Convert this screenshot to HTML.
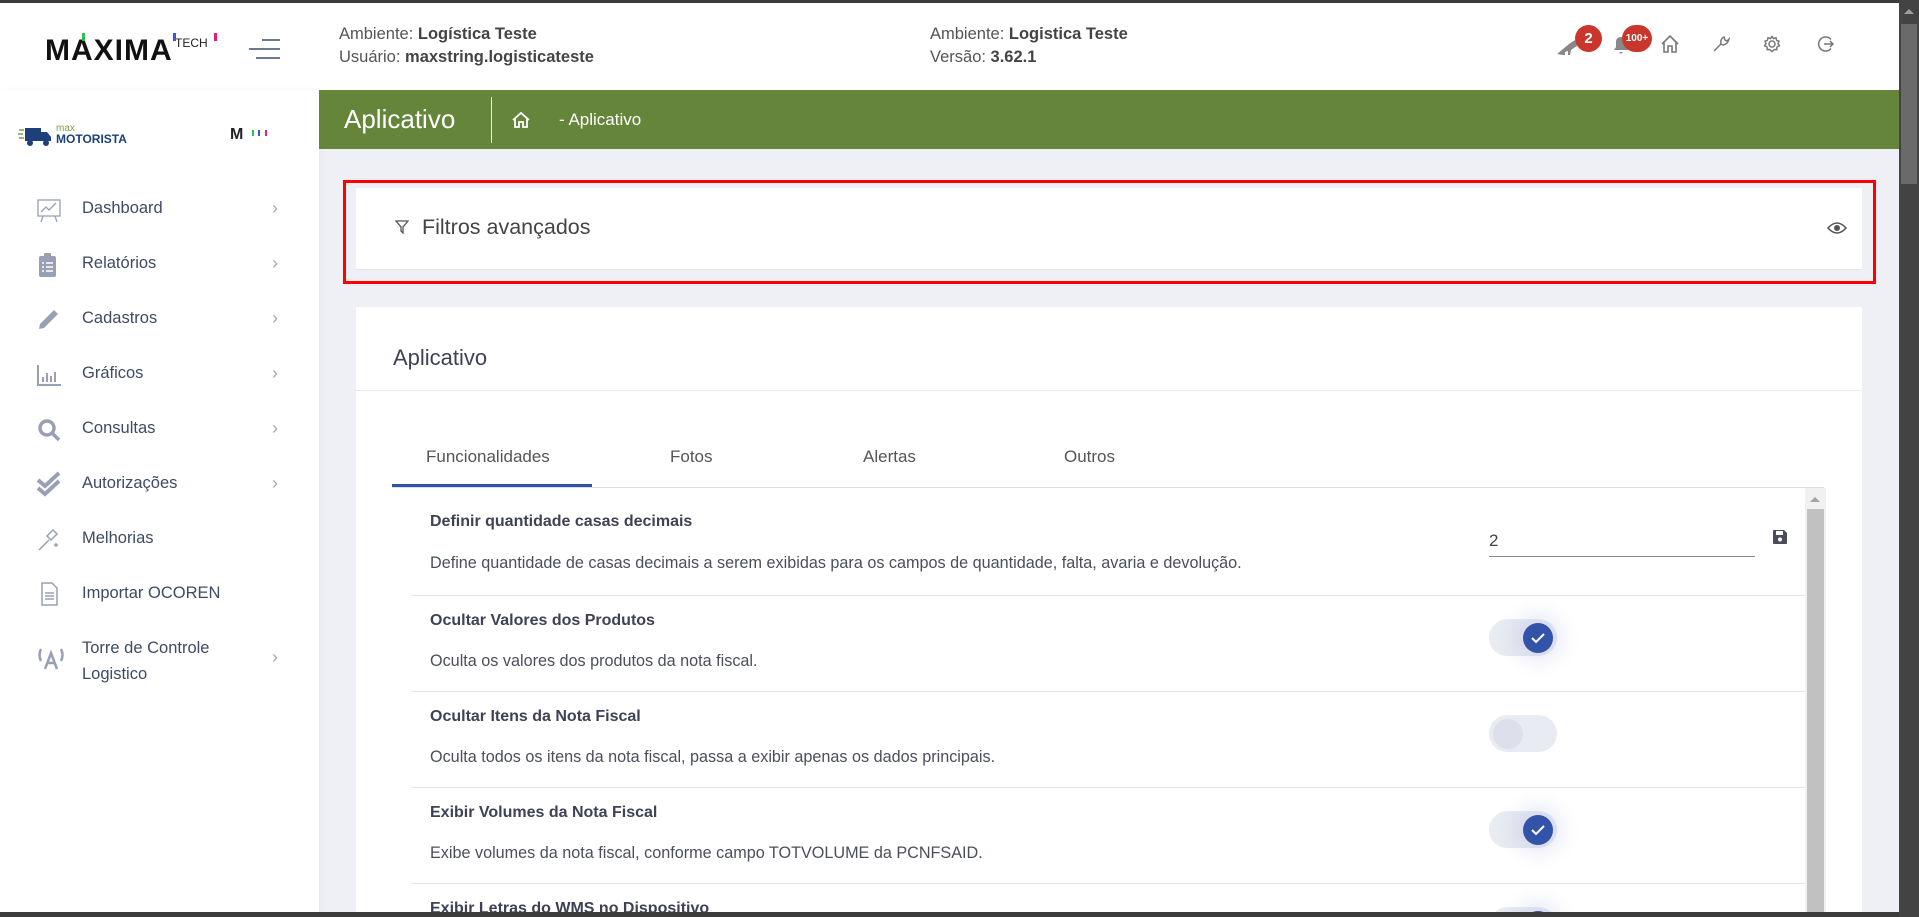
<!DOCTYPE html>
<html style="overflow:hidden;width:1919px;height:917px"><head><meta charset="utf-8"><style>
*{box-sizing:border-box;margin:0;padding:0}
body{width:1919px;height:917px;overflow:hidden;background:#eef0f6;font-family:"Liberation Sans",sans-serif;color:#3f4254;position:relative}
.abs{position:absolute}
#topb{left:0;top:0;width:1919px;height:3px;background:#3c3c3c}
#hdr{left:0;top:3px;width:1900px;height:87px;background:#fff}
#side{left:0;top:90px;width:319px;height:827px;background:#fff;box-shadow:0 2px 8px rgba(0,0,0,.06)}
#green{left:319px;top:90px;width:1581px;height:59px;background:#65853a}
#vs{left:1899px;top:0;width:20px;height:917px;background:#434343}
#vs .th{position:absolute;left:2px;top:24px;width:16px;height:160px;background:#6a6a6a}
#botb{left:0;top:912px;width:1900px;height:5px;background:#3c3c3c}
.ht{font-size:16.5px;color:#555}
.ht b{color:#444}
.nav{position:absolute;left:82px;font-size:16.5px;color:#3f4a64}
.chev{position:absolute;left:272px;font-size:18px;color:#aaa}
.ic{position:absolute;left:36px;width:26px;height:26px}
.badge{position:absolute;background:#c9372c;color:#fff;border-radius:50%;font-weight:bold;text-align:center}
.card{background:#fff}
.rt{position:absolute;left:430px;font-size:16px;font-weight:bold;color:#3f4254}
.rd{position:absolute;left:430px;font-size:16.2px;color:#4b4f5c}
.div{position:absolute;left:411px;width:1394px;height:1px;background:#e4e6ec}
.tog{position:absolute;left:1489px;width:68px;height:37px;border-radius:19px;background:#e9ebf2;overflow:visible}
.tog .k{position:absolute;top:4px;width:30px;height:30px;border-radius:50%}
.on .k{left:34px;background:#3353a8;box-shadow:0 0 18px 10px rgba(80,100,200,.12)}
.off .k{left:4px;background:#dde0ea}
.tab{position:absolute;top:447px;font-size:17px;color:#555}
#clip{position:absolute;left:0;top:0;width:1919px;height:917px;overflow:hidden}
</style></head><body><div id="clip">
<div id="topb" class="abs"></div>
<div id="hdr" class="abs"></div>
<div class="abs" style="left:45px;top:36px;font-size:30px;font-weight:bold;color:#111;letter-spacing:1px;line-height:30px">MAXIMA</div>
<div class="abs" style="left:175px;top:36px;font-size:12px;color:#222">TECH</div>
<div class="abs" style="left:82px;top:33px;width:3px;height:8px;background:#2fbf4f"></div>
<div class="abs" style="left:173px;top:33px;width:3px;height:8px;background:#4050e0"></div>
<div class="abs" style="left:214px;top:33px;width:3px;height:8px;background:#e0207a"></div>
<div class="abs" style="left:262px;top:39px;width:18px;height:2px;background:#6b7a90"></div>
<div class="abs" style="left:249px;top:48px;width:31px;height:2px;background:#6b7a90"></div>
<div class="abs" style="left:256px;top:57px;width:24px;height:2px;background:#6b7a90"></div>
<div class="abs ht" style="left:339px;top:25px">Ambiente: <b>Logística Teste</b></div>
<div class="abs ht" style="left:339px;top:48px">Usuário: <b>maxstring.logisticateste</b></div>
<div class="abs ht" style="left:930px;top:25px">Ambiente: <b>Logistica Teste</b></div>
<div class="abs ht" style="left:930px;top:48px">Versão: <b>3.62.1</b></div>
<svg class="abs" style="left:1555px;top:36px" width="24" height="20" viewBox="0 0 24 20"><path d="M2 18 L14 8 L20 4 L22 10 L16 14 L15 19 L13 19 L13 15 L10 16 L10 19 L8 19 Z" fill="#888"/></svg>
<div class="badge" style="left:1575px;top:25px;width:27px;height:27px;line-height:27px;font-size:15px">2</div>
<svg class="abs" style="left:1610px;top:34px" width="22" height="22" viewBox="0 0 22 22"><path d="M4 16 L6 13 L6 8 Q6 3 11 3 Q16 3 16 8 L16 13 L18 16 Z M9 18 L13 18 L11 20Z" fill="#888"/></svg>
<div class="badge" style="left:1622px;top:25px;width:30px;height:27px;line-height:27px;font-size:10px;border-radius:14px">100+</div>
<svg class="abs" style="left:1660px;top:34px" width="20" height="20" viewBox="0 0 20 20" fill="none" stroke="#777" stroke-width="1.6"><path d="M2 10 L10 2 L18 10 M4 8 L4 18 L8 18 L8 12 L12 12 L12 18 L16 18 L16 8"/></svg>
<svg class="abs" style="left:1712px;top:35px" width="18" height="18" viewBox="0 0 18 18" fill="none" stroke="#777" stroke-width="1.5"><path d="M2 16 L9 9 M9 9 Q8 4 12 2 L13 5 L15 6 L17 4 Q16 9 11 10 Z"/></svg>
<svg class="abs" style="left:1763px;top:35px" width="18" height="18" viewBox="0 0 18 18" fill="none" stroke="#777" stroke-width="1.5"><circle cx="9" cy="9" r="3"/><path d="M9 1.5 L10.5 3.5 L13 2.8 L13.6 5.3 L16 6.2 L15 8.5 L16.4 10.7 L14 12 L13.8 14.6 L11.2 14.5 L9 16.5 L6.8 14.5 L4.2 14.6 L4 12 L1.6 10.7 L3 8.5 L2 6.2 L4.4 5.3 L5 2.8 L7.5 3.5 Z"/></svg>
<svg class="abs" style="left:1817px;top:35px" width="18" height="18" viewBox="0 0 18 18" fill="none" stroke="#777" stroke-width="1.5"><path d="M14 4.5 A7 7 0 1 0 14 13.5 M7 9 L16 9 M13 6 L16 9 L13 12"/></svg>
<div id="side" class="abs"></div>
<svg class="abs" style="left:18px;top:127px" width="38" height="20" viewBox="0 0 38 20"><path d="M1 3h5M0 7h5M1 11h5" stroke="#7aa04a" stroke-width="1.5"/><rect x="7" y="1" width="16" height="13" fill="#1d3f7a"/><path d="M23 5h6l4 5v4H23z" fill="#1d3f7a"/><circle cx="12" cy="16" r="3" fill="#1d3f7a"/><circle cx="28" cy="16" r="3" fill="#1d3f7a"/></svg>
<div class="abs" style="left:56px;top:124px;font-size:10px;color:#7aa04a;line-height:10px">max</div>
<div class="abs" style="left:56px;top:133px;font-size:12px;font-weight:bold;color:#1d3f7a;line-height:12px">MOTORISTA</div>
<div class="abs" style="left:230px;top:126px;font-size:16px;font-weight:bold;color:#222">M</div>
<div class="abs" style="left:252px;top:130px;width:2px;height:6px;background:#2fbf4f"></div>
<div class="abs" style="left:258px;top:130px;width:2px;height:6px;background:#4050e0"></div>
<div class="abs" style="left:265px;top:130px;width:2px;height:6px;background:#e0207a"></div>

<svg class="ic" style="top:198px" viewBox="0 0 26 26" fill="none" stroke="#9aa0b4" stroke-width="1.3"><rect x="2" y="2" width="22" height="16"/><path d="M5 14 L10 9 L13 12 L20 5 M7 18 L5 24 M19 18 L21 24"/></svg>
<div class="nav" style="top:199px">Dashboard</div><div class="chev" style="top:198px">›</div>
<svg class="ic" style="top:252px" viewBox="0 0 26 26"><rect x="3" y="4" width="17" height="21" rx="2" fill="#9aa0b4"/><rect x="8" y="1" width="7" height="5" rx="1" fill="#9aa0b4"/><path d="M6 11h2M10 11h7M6 15h2M10 15h7M6 19h2M10 19h7" stroke="#fff" stroke-width="1.5"/></svg>
<div class="nav" style="top:254px">Relatórios</div><div class="chev" style="top:253px">›</div>
<svg class="ic" style="top:306px" viewBox="0 0 26 26"><path d="M3 23 L4 18 L18 4 L22 8 L8 22 Z" fill="#9aa0b4"/></svg>
<div class="nav" style="top:309px">Cadastros</div><div class="chev" style="top:308px">›</div>
<svg class="ic" style="top:362px" viewBox="0 0 26 26" fill="none" stroke="#9aa0b4" stroke-width="2"><path d="M2 3v20h23M7 20v-5M11 20v-9M15 20v-6M19 20v-10"/></svg>
<div class="nav" style="top:364px">Gráficos</div><div class="chev" style="top:363px">›</div>
<svg class="ic" style="top:417px" viewBox="0 0 26 26" fill="none" stroke="#9aa0b4" stroke-width="3.5"><circle cx="11" cy="11" r="7"/><path d="M16 16 L23 23"/></svg>
<div class="nav" style="top:419px">Consultas</div><div class="chev" style="top:418px">›</div>
<svg class="ic" style="top:471px" viewBox="0 0 26 26" fill="none" stroke="#9aa0b4" stroke-width="4"><path d="M2 9 L9 15 L23 2 M2 17 L9 23 L23 10"/></svg>
<div class="nav" style="top:474px">Autorizações</div><div class="chev" style="top:473px">›</div>
<svg class="ic" style="top:527px" viewBox="0 0 26 26" fill="none" stroke="#9aa0b4" stroke-width="1.5"><path d="M3 23 L13 13 M11 9 L17 3 L21 7 L15 13 Z M18 18h4M20 16v4"/></svg>
<div class="nav" style="top:529px">Melhorias</div>
<svg class="ic" style="top:581px" viewBox="0 0 26 26" fill="none" stroke="#9aa0b4" stroke-width="1.5"><path d="M6 2h10l5 5v17H6z M9 12h9M9 15h9M9 18h9"/></svg>
<div class="nav" style="top:584px">Importar OCOREN</div>
<svg class="ic" style="top:645px;width:30px" viewBox="0 0 30 26" fill="none" stroke="#9aa0b4" stroke-width="2.5"><path d="M5 4 Q2 10 5 16 M25 4 Q28 10 25 16 M9 24 L15 8 L21 24 M11 18h8"/></svg>
<div class="nav" style="top:635px;line-height:26px">Torre de Controle<br>Logistico</div><div class="chev" style="top:647px">›</div>

<div id="green" class="abs"></div>
<div class="abs" style="left:344px;top:104px;font-size:26px;color:#fff">Aplicativo</div>
<div class="abs" style="left:491px;top:97px;width:1px;height:46px;background:#e8eee0"></div>
<svg class="abs" style="left:512px;top:111px" width="18" height="18" viewBox="0 0 18 18" fill="none" stroke="#fff" stroke-width="1.8"><path d="M1 9 L9 2 L17 9 M3 7 V16 H7 V11 H11 V16 H15 V7"/></svg>
<div class="abs" style="left:559px;top:110px;font-size:17px;color:#fff">- Aplicativo</div>

<div class="abs" style="left:343px;top:180px;width:1533px;height:104px;border:3px solid #ff0000"></div>
<div class="abs card" style="left:356px;top:188px;width:1506px;height:82px;border-bottom:1px solid #e4e6ec"></div>
<svg class="abs" style="left:395px;top:220px" width="14" height="14" viewBox="0 0 14 14" fill="none" stroke="#555" stroke-width="1.3"><path d="M1 1 H13 L8 7 V13 L6 11 V7 Z"/></svg>
<div class="abs" style="left:422px;top:215px;font-size:21.5px;color:#444">Filtros avançados</div>
<svg class="abs" style="left:1827px;top:221px" width="20" height="14" viewBox="0 0 20 14"><path d="M1 7 Q10 -3 19 7 Q10 17 1 7Z" fill="none" stroke="#555" stroke-width="1.6"/><circle cx="10" cy="7" r="3" fill="#555"/></svg>

<div class="abs card" style="left:356px;top:307px;width:1506px;height:610px"></div>
<div class="abs" style="left:393px;top:345px;font-size:22px;color:#3f4254">Aplicativo</div>
<div class="abs" style="left:356px;top:390px;width:1506px;height:1px;background:#e8e9ee"></div>
<div class="tab" style="left:426px;color:#555">Funcionalidades</div>
<div class="tab" style="left:670px">Fotos</div>
<div class="tab" style="left:863px">Alertas</div>
<div class="tab" style="left:1064px">Outros</div>
<div class="abs" style="left:392px;top:487px;width:1432px;height:1px;background:#dcdde2"></div>
<div class="abs" style="left:392px;top:484px;width:200px;height:3px;background:#3353a8"></div>

<div class="abs" style="left:1805px;top:488px;width:21px;height:429px;background:#f1f1f1"></div>
<div class="abs" style="left:1807px;top:509px;width:17px;height:408px;background:#c1c1c1"></div>
<div class="abs" style="left:1810px;top:497px;width:0;height:0;border-left:5px solid transparent;border-right:5px solid transparent;border-bottom:5px solid #a3a3a3"></div>

<div class="rt" style="top:513px">Definir quantidade casas decimais</div>
<div class="rd" style="top:554px">Define quantidade de casas decimais a serem exibidas para os campos de quantidade, falta, avaria e devolução.</div>
<div class="abs" style="left:1489px;top:531px;font-size:17px;color:#444">2</div>
<div class="abs" style="left:1489px;top:556px;width:266px;height:1px;background:#8a8a8a"></div>
<svg class="abs" style="left:1772px;top:529px" width="16" height="16" viewBox="0 0 16 16"><path d="M1 2 Q1 1 2 1 H12 L15 4 V14 Q15 15 14 15 H2 Q1 15 1 14 Z" fill="#4a4d58"/><rect x="4" y="2" width="7" height="4" fill="#fff"/><circle cx="8" cy="10.5" r="2" fill="#fff"/></svg>
<div class="div" style="top:595px"></div>

<div class="rt" style="top:612px">Ocultar Valores dos Produtos</div>
<div class="rd" style="top:652px">Oculta os valores dos produtos da nota fiscal.</div>
<div class="tog on" style="top:619px"><div class="k"><svg width="30" height="30" viewBox="0 0 30 30"><path d="M9 15 L13 19 L21 11" fill="none" stroke="#fff" stroke-width="2"/></svg></div></div>
<div class="div" style="top:691px"></div>

<div class="rt" style="top:708px">Ocultar Itens da Nota Fiscal</div>
<div class="rd" style="top:748px">Oculta todos os itens da nota fiscal, passa a exibir apenas os dados principais.</div>
<div class="tog off" style="top:715px"><div class="k"></div></div>
<div class="div" style="top:787px"></div>

<div class="rt" style="top:804px">Exibir Volumes da Nota Fiscal</div>
<div class="rd" style="top:844px">Exibe volumes da nota fiscal, conforme campo TOTVOLUME da PCNFSAID.</div>
<div class="tog on" style="top:811px"><div class="k"><svg width="30" height="30" viewBox="0 0 30 30"><path d="M9 15 L13 19 L21 11" fill="none" stroke="#fff" stroke-width="2"/></svg></div></div>
<div class="div" style="top:883px"></div>

<div class="rt" style="top:900px">Exibir Letras do WMS no Dispositivo</div>
<div class="tog on" style="top:907px"><div class="k"></div></div>

<div id="botb" class="abs"></div>
<div id="vs" class="abs"><div class="th"></div><div style="position:absolute;left:5px;top:9px;border-left:5px solid transparent;border-right:5px solid transparent;border-bottom:5px solid #a0a0a0"></div></div>
</div></body></html>
